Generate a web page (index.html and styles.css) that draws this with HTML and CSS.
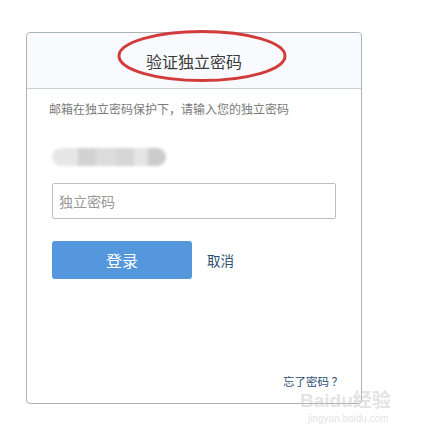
FILE: index.html
```html
<!DOCTYPE html>
<html lang="zh-CN">
<head>
    <meta charset="UTF-8">
    <meta name="viewport" content="width=device-width, initial-scale=1.0">
    <title>验证独立密码</title>
    <link rel="stylesheet" href="styles.css">
</head>
<body>
    <div class="card">
        <div class="card-header">
            <h2>验证独立密码</h2>
            <!-- 红色圈注 -->
            <svg class="mark" width="172" height="54" viewBox="0 0 172 54">
                <ellipse cx="86" cy="27" rx="83" ry="24.5" fill="none" stroke="#d23b3b" stroke-width="3"/>
            </svg>
        </div>
        <div class="card-body">
            <p class="desc">邮箱在独立密码保护下，请输入您的独立密码</p>
            <div class="account">
                <span class="px p1"></span><span class="px p2"></span><span class="px p3"></span><span class="px p4"></span><span class="px p5"></span><span class="px p6"></span>
            </div>
            <input type="password" class="pwd" placeholder="独立密码">
            <div class="actions">
                <button class="login">登录</button>
                <a href="#" class="cancel">取消</a>
            </div>
            <div class="footer">
                <a href="#" class="forgot">忘了密码 ？</a>
            </div>
        </div>
    </div>
    <div class="watermark">
        <div class="wm-big">Bai<span>du</span>经验</div>
        <div class="wm-small">jingyan.baidu.com</div>
    </div>
</body>
</html>
```

FILE: styles.css
```css
body {
    font-family: "Noto Sans CJK SC", "Liberation Sans", sans-serif;
    background-color: #ffffff;
    margin: 0;
    padding: 32px 0 0 26px;
    position: relative;
    height: 431px;
    box-sizing: border-box;
    overflow: hidden;
}
.card {
    width: 336px;
    height: 372px;
    box-sizing: border-box;
    border: 1px solid #aab2ba;
    border-radius: 4px;
    display: flex;
    flex-direction: column;
    background: #fff;
}
.card-header {
    position: relative;
    height: 55px;
    background-color: #f8fafd;
    border-bottom: 1px solid #c9d0d8;
    border-radius: 4px 4px 0 0;
    display: flex;
    align-items: center;
    justify-content: center;
}
.card-header h2 {
    margin: 0;
    font-size: 16px;
    font-weight: normal;
    color: #3a3a3a;
    line-height: 20px;
    padding-top: 1px;
}
.mark {
    position: absolute;
    left: 89px;
    top: -4px;
}
.card-body {
    flex: 1;
    display: flex;
    flex-direction: column;
    padding: 12px 18px 14px 25px;
}
.desc {
    margin: 0 0 0 -3px;
    font-size: 12px;
    line-height: 16px;
    color: #7a7a7a;
}
.account {
    margin-top: 31px;
    height: 18px;
    display: flex;
    filter: blur(1.5px);
}
.px {
    display: block;
    height: 18px;
}
.p1 { width: 26px; background: #e6e6e6; border-radius: 9px 0 0 9px; }
.p2 { width: 18px; background: #d2d2d2; }
.p3 { width: 20px; background: #dcdcdc; }
.p4 { width: 18px; background: #d6d6d6; }
.p5 { width: 14px; background: #e4e4e4; }
.p6 { width: 18px; background: #cccccc; border-radius: 0 9px 9px 0; }
.pwd {
    margin-top: 17px;
    width: 284px;
    height: 36px;
    box-sizing: border-box;
    border: 1px solid #b9bfc6;
    border-radius: 2px;
    padding: 0 6px;
    font-family: inherit;
    font-size: 14px;
    color: #333;
}
.pwd::placeholder {
    color: #999;
}
.actions {
    margin-top: 22px;
    display: flex;
    align-items: center;
}
.login {
    width: 140px;
    height: 38px;
    border: none;
    border-radius: 3px;
    background-color: #5497dd;
    color: #fff;
    font-family: inherit;
    font-size: 16px;
    cursor: pointer;
}
.cancel {
    margin-left: 15px;
    font-size: 13.5px;
    color: #2c4d72;
    text-decoration: none;
}
.footer {
    margin-top: auto;
    display: flex;
    justify-content: flex-end;
}
.forgot {
    font-size: 11.5px;
    line-height: 16px;
    color: #2c4d72;
    text-decoration: none;
}
.watermark {
    position: absolute;
    left: 300px;
    top: 390px;
    color: rgba(200, 200, 200, 0.5);
    font-family: "Liberation Sans", "Noto Sans CJK SC", sans-serif;
    pointer-events: none;
}
.wm-big {
    font-size: 19px;
    font-weight: bold;
    line-height: 22px;
}
.wm-small {
    font-size: 10px;
    line-height: 14px;
    padding-left: 8px;
}
```
